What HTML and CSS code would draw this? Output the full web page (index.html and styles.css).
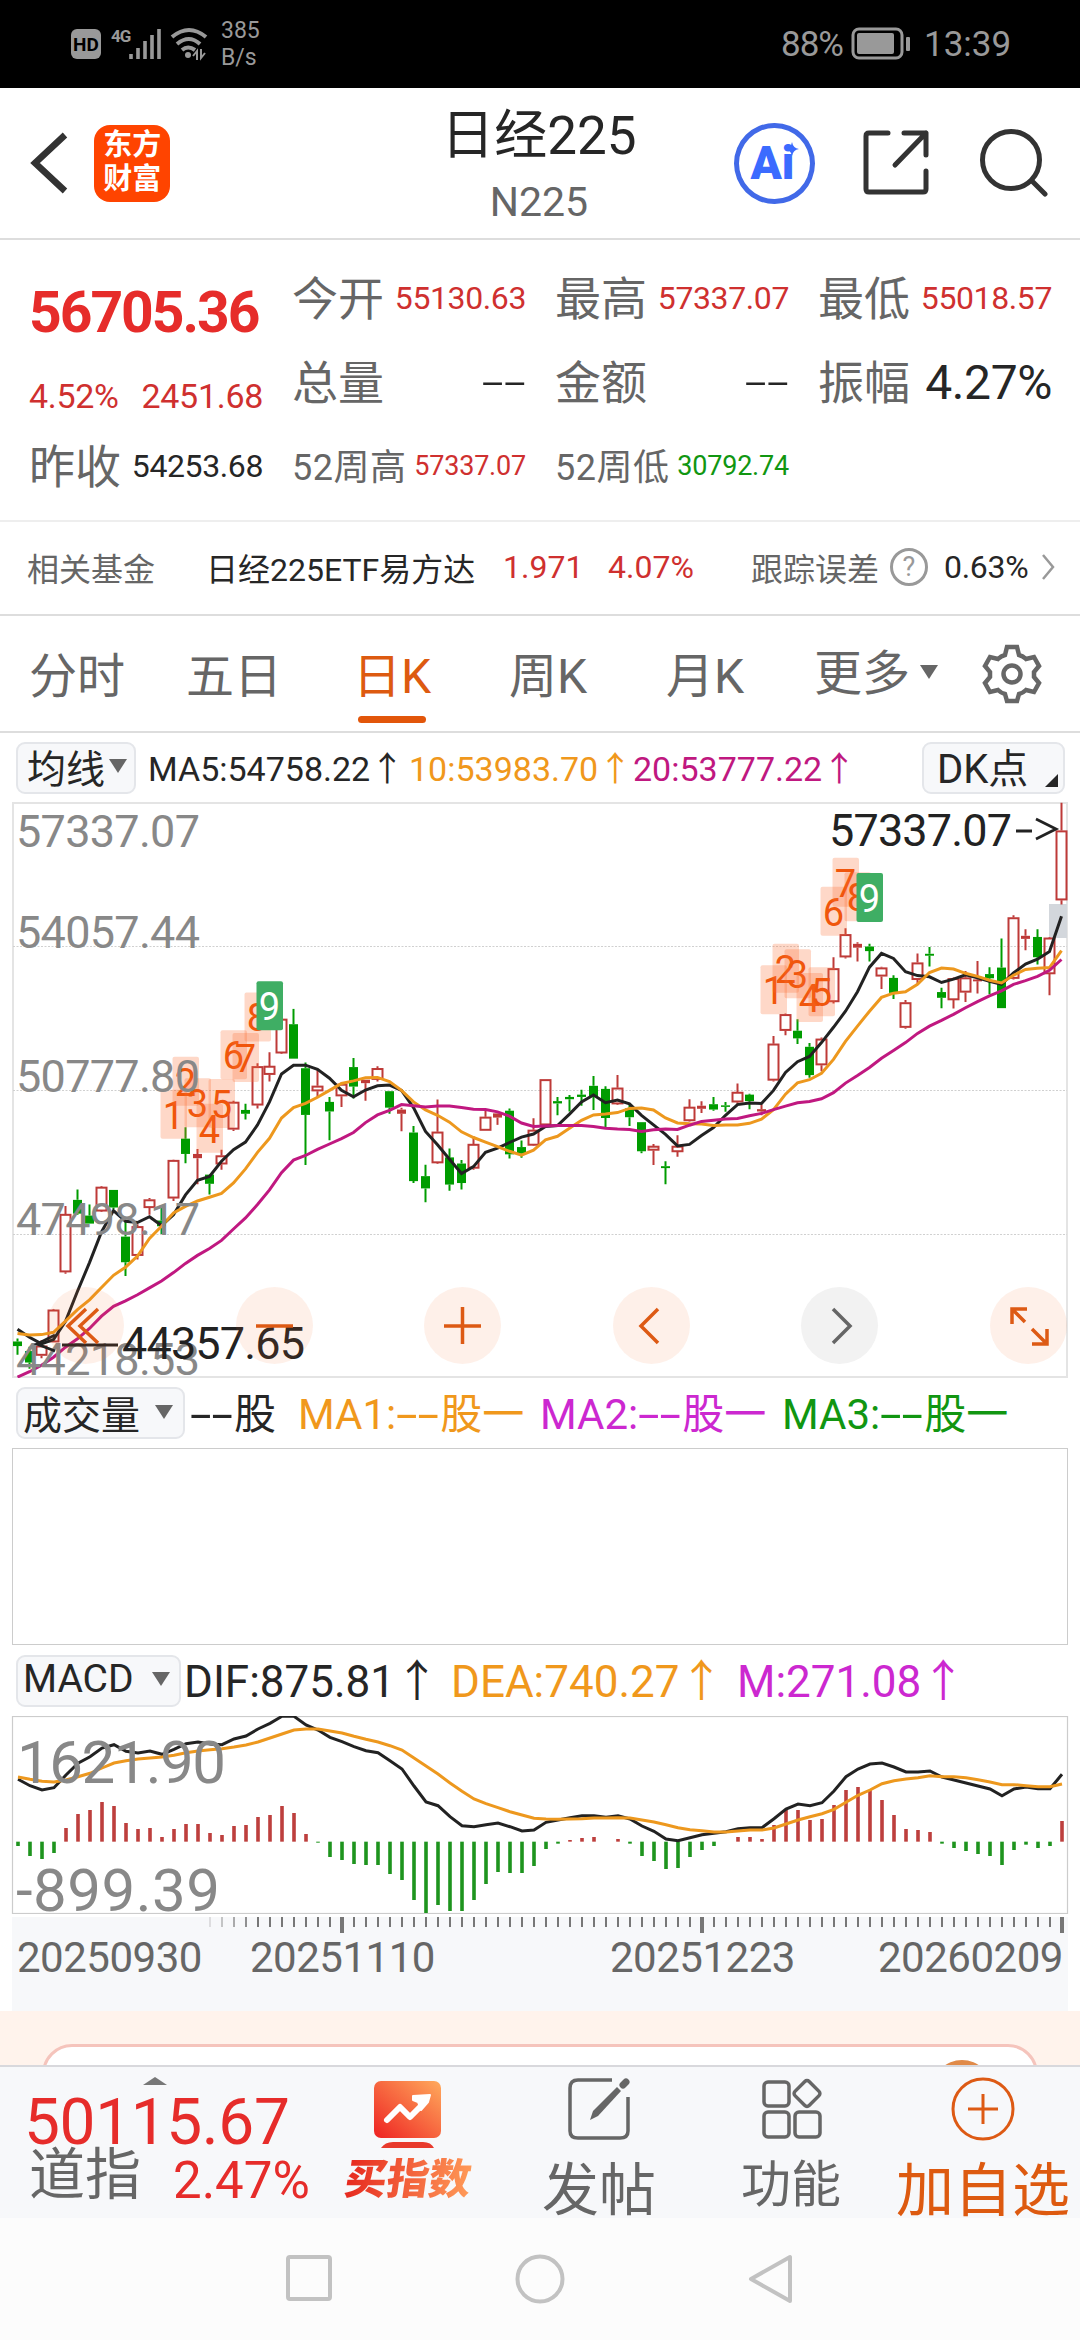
FILE: index.html
```
<!DOCTYPE html>
<html lang="zh-CN">
<head>
    <meta charset="UTF-8">
    <meta name="viewport" content="width=device-width, initial-scale=1.0">
    <title>日经225</title>
    <link rel="stylesheet" href="styles.css">
</head>
<body>

    <div class="statusbar">
        <span class="hd">HD</span>
        <span class="net">4G</span>
        <svg class="signal" width="34" height="32" viewBox="0 0 34 32"><path d="M3 26v5M10 20v11M17 13v18M24 7v24M31 1v30" stroke="#999" stroke-width="3.6"/></svg>
        <svg class="wifi" width="38" height="34" viewBox="0 0 38 34" fill="none" stroke="#999" stroke-width="4"><path d="M2 10Q19-4 36 10M7 17Q19 7 30 17M12 23Q18 18 25 23"/><circle cx="18" cy="28" r="3" fill="#999" stroke="none"/><path d="M23 29l4-5v9M31 22v9l4-5" stroke-width="2"/></svg>
        <span class="speed">385<br>B/s</span>
        <span class="percent">88%</span>
        <svg class="battery" width="60" height="34" viewBox="0 0 60 34"><rect x="2" y="2" width="49" height="29" rx="6" fill="none" stroke="#999" stroke-width="3"/><rect x="6" y="6" width="37" height="21" rx="2" fill="#999"/><rect x="55" y="10" width="4" height="14" rx="1" fill="#999"/></svg>
        <span class="clock">13:39</span>
    </div>

    <div class="header">
        <svg class="back" width="44" height="70" viewBox="0 0 44 70"><path d="M38 7L8 35L38 63" fill="none" stroke="#333" stroke-width="6.5"/></svg>
        <div class="logo">东方<br>财富</div>
        <div class="title">
            <h1>日经225</h1>
            <p>N225</p>
        </div>
        <div class="ai">Ai<svg width="14" height="14" viewBox="0 0 14 14"><path d="M7 0Q8 6 14 7Q8 8 7 14Q6 8 0 7Q6 6 7 0z" fill="#3b6bff"/></svg></div>
        <svg class="share" width="70" height="70" viewBox="0 0 70 70" fill="none" stroke="#333" stroke-width="5" stroke-linecap="round" stroke-linejoin="round"><path d="M26 5H7Q4 5 4 8V61Q4 64 7 64H61Q64 64 64 61V43M42 5H64V27M64 5L33 37"/></svg>
        <svg class="search" width="70" height="70" viewBox="0 0 70 70" fill="none" stroke="#333" stroke-width="5" stroke-linecap="round"><circle cx="33" cy="32" r="28.5"/><path d="M54 53L67 66"/></svg>
    </div>

    <div class="quote">
        <div class="main-price">
            <div class="price">56705.36</div>
            <div class="change"><span>4.52%</span><span>2451.68</span></div>
            <div class="item"><label>昨收</label><b>54253.68</b></div>
        </div>
        <div class="item"><label>今开</label><b class="up">55130.63</b></div>
        <div class="item"><label>最高</label><b class="up">57337.07</b></div>
        <div class="item"><label>最低</label><b class="up">55018.57</b></div>
        <div class="item"><label>总量</label><b class="none">--</b></div>
        <div class="item"><label>金额</label><b class="none">--</b></div>
        <div class="item"><label>振幅</label><b class="big">4.27%</b></div>
        <div class="item week"><label>52周高</label><b class="up">57337.07</b></div>
        <div class="item week"><label>52周低</label><b class="down">30792.74</b></div>
    </div>

    <div class="fund">
        <span class="fund-label">相关基金</span>
        <span class="fund-name">日经225ETF易方达</span>
        <span class="fund-value up">1.971</span>
        <span class="fund-rate up">4.07%</span>
        <span class="fund-error">跟踪误差</span>
        <span class="help">?</span>
        <span class="fund-diff">0.63%</span>
        <svg width="16" height="28" viewBox="0 0 16 28"><path d="M3 2L13 14L3 26" fill="none" stroke="#999" stroke-width="2.5"/></svg>
    </div>

    <div class="tabs">
        <span>分时</span>
        <span>五日</span>
        <span class="active">日K</span>
        <span>周K</span>
        <span>月K</span>
        <span class="more">更多<i class="caret"></i></span>
        <svg width="60" height="60" viewBox="0 0 60 60" fill="none" stroke="#666" stroke-width="4.5" stroke-linejoin="miter"><path d="M25 3H35L37 11Q41 12 44 15L52 13L57 22L52 28V33L57 39L52 48L44 46Q41 49 37 50L35 57H25L23 50Q19 49 16 46L8 48L3 39L8 33V28L3 22L8 13L16 15Q19 12 23 11Z"/><circle cx="30" cy="30" r="8.5"/></svg>
    </div>

    <div class="legend ma">
        <span class="picker">均线<i class="caret"></i></span>
        <span class="black">MA5:54758.22↑</span>
        <span class="orange">10:53983.70↑</span>
        <span class="pink">20:53777.22↑</span>
        <span class="picker dk">DK点<i class="corner"></i></span>
    </div>

    <div class="price-chart">
        <svg id="kline" width="1080" height="576" viewBox="0 0 1080 576"></svg>
        <div class="controls">
            <span><svg viewBox="0 0 77 77"><path d="M39 22L21 39L39 56M51 22L33 39L51 56"/></svg></span>
            <span><svg viewBox="0 0 77 77"><path d="M20 39H57"/></svg></span>
            <span><svg viewBox="0 0 77 77"><path d="M20 39H57M38.500 20V57"/></svg></span>
            <span><svg viewBox="0 0 77 77"><path d="M45 22L28 39L45 56"/></svg></span>
            <span class="off"><svg viewBox="0 0 77 77"><path d="M32 22L49 39L32 56"/></svg></span>
            <span><svg viewBox="0 0 77 77"><path d="M37 22H22V37M22 22L35 35M42 57H57V42M57 57L42 42"/></svg></span>
        </div>
    </div>

    <div class="legend volume">
        <span class="picker">成交量<i class="caret"></i></span>
        <span class="black"><i class="dash">--</i>股</span>
        <span class="orange">MA1:<i class="dash">--</i>股一</span>
        <span class="purple">MA2:<i class="dash">--</i>股一</span>
        <span class="green">MA3:<i class="dash">--</i>股一</span>
    </div>
    <div class="volume-chart"></div>

    <div class="legend macd">
        <span class="picker">MACD<i class="caret"></i></span>
        <span class="black">DIF:875.81↑</span>
        <span class="orange">DEA:740.27↑</span>
        <span class="purple">M:271.08↑</span>
    </div>
    <svg id="macd" width="1080" height="198" viewBox="0 0 1080 198"></svg>

    <div class="axis">
        <svg id="ticks" width="1056" height="17" viewBox="12 0 1056 17"></svg>
        <div class="dates">
            <span>20250930</span>
            <span>20251110</span>
            <span>20251223</span>
            <span>20260209</span>
        </div>
    </div>

    <div class="promo"><div class="promo-card"><i></i></div></div>

    <div class="toolbar">
        <div class="index">
            <i class="up-caret"></i>
            <div class="index-price">50115.67</div>
            <div class="index-row"><span>道指</span><b>2.47%</b></div>
        </div>
        <div class="tool buy">
            <svg width="70" height="72" viewBox="0 0 70 72">
                <defs><linearGradient id="fire" x1="0" y1="1" x2="1" y2="0"><stop offset="0" stop-color="#ee2222"/><stop offset="1" stop-color="#ffaa5c"/></linearGradient></defs>
                <rect x="1" y="2" width="67" height="57" rx="7" fill="url(#fire)"/>
                <path d="M8 69Q12 63 20 63H50Q58 63 61 69Z" fill="#e83a2c"/>
                <path d="M14 41L27 28L37 38L50 25" fill="none" stroke="#fff" stroke-width="6" stroke-linecap="round" stroke-linejoin="round"/>
                <path d="M40 17L57 16L55 23L48 31L45 23L40 21Z" fill="#fff" stroke="#fff" stroke-width="2" stroke-linejoin="round"/>
            </svg>
            <span>买指数</span>
        </div>
        <div class="tool post">
            <svg width="64" height="64" viewBox="0 0 64 64"><path d="M45 3H11Q3 3 3 11V54Q3 61 11 61H53Q61 61 61 54V20" fill="none" stroke="#666" stroke-width="3.5"/><path d="M50 10L54 14L31 39L23 43L26 34Z" fill="#666"/><path d="M56 8L59 5" stroke="#666" stroke-width="7" stroke-linecap="round"/></svg>
            <span>发帖</span>
        </div>
        <div class="tool func">
            <svg width="62" height="62" viewBox="0 0 62 62" fill="none" stroke="#666" stroke-width="3.500"><rect x="4" y="4" width="25" height="24" rx="4"/><rect x="4" y="34" width="25" height="25" rx="4"/><rect x="35" y="34" width="25" height="25" rx="4"/><rect x="37" y="5.500" width="20" height="20" rx="3" transform="rotate(45 47 15.500)"/></svg>
            <span>功能</span>
        </div>
        <div class="tool add">
            <svg width="66" height="66" viewBox="0 0 66 66" fill="none" stroke="#dd5a14" stroke-width="3"><circle cx="33" cy="33" r="30"/><path d="M18 33H48M33 18V48"/></svg>
            <span>加自选</span>
        </div>
    </div>

    <div class="navbar">
        <svg width="52" height="52" viewBox="0 0 52 52"><rect x="5" y="4" width="42" height="42" rx="2"/></svg>
        <svg width="52" height="52" viewBox="0 0 52 52"><circle cx="26" cy="26" r="22.500"/></svg>
        <svg width="52" height="52" viewBox="0 0 52 52"><path d="M45 4V48L6 26Z" stroke-linejoin="round"/></svg>
    </div>

    <script src="chart.js"></script>
</body>
</html>
```
FILE: styles.css
```
* {
    margin: 0;
    padding: 0;
    box-sizing: border-box;
}

body {
    width: 1080px;
    height: 2340px;
    overflow: hidden;
    background: #fff;
    color: #262626;
    font-family: Roboto, "Noto Sans CJK SC", sans-serif;
}

i {
    font-style: normal;
}

svg {
    display: block;
    flex: none;
}

.up { color: #cf302f; }
.down { color: #119611; }
.black { color: #262626; }
.orange { color: #f0981c; }
.pink { color: #c01880; }
.purple { color: #cc28d0; }
.green { color: #119611; }

/* status bar */
.statusbar {
    height: 88px;
    background: #000;
    color: #999;
    display: flex;
    align-items: center;
    padding-left: 71px;
}

.hd {
    width: 30px;
    height: 30px;
    border-radius: 6px;
    background: #999;
    color: #000;
    font-size: 19px;
    font-weight: bold;
    line-height: 31px;
    text-align: center;
}

.net {
    width: 19px;
    margin-left: 10px;
    margin-bottom: 16px;
    font-size: 17px;
    font-weight: bold;
    letter-spacing: -1px;
    line-height: 18px;
}

.signal { margin-left: -2px; }
.wifi { margin-left: 8px; }

.speed {
    width: 50px;
    margin-left: 13px;
    font-size: 23px;
    line-height: 27px;
}

.percent {
    margin-left: 510px;
    width: 70px;
    font-size: 35px;
    letter-spacing: -1px;
}

.clock {
    margin-left: 13px;
    font-size: 35px;
}

/* header */
.header {
    height: 152px;
    border-bottom: 2px solid #ddd;
    display: flex;
    align-items: center;
    padding: 0 32px 0 27px;
}

.logo {
    width: 77px;
    height: 77px;
    margin-left: 23px;
    border-radius: 16px;
    background: #ff4400;
    color: #fff;
    font-size: 29px;
    font-weight: bold;
    line-height: 34px;
    text-align: center;
    padding-top: 3px;
}

.title {
    width: 400px;
    margin-left: 170px;
    padding-top: 8px;
    text-align: center;
}

.title h1 {
    font-size: 53px;
    font-weight: normal;
    line-height: 70px;
}

.title p {
    font-size: 41px;
    line-height: 50px;
    color: #666;
    padding-top: 6px;
    height: 62px;
}

.ai {
    position: relative;
    width: 81px;
    height: 81px;
    margin-left: -3px;
    border: 5px solid #4169e8;
    border-radius: 50%;
    color: #3b6bff;
    font-size: 46px;
    font-weight: 900;
    line-height: 70px;
    padding-left: 11px;
}

.ai svg {
    position: absolute;
    left: 46px;
    top: 14px;
}

.share { margin-left: 47px; }
.search { margin-left: 46px; }

/* quote */
.quote {
    height: 282px;
    border-bottom: 2px solid #eee;
    padding: 16px 28px 0 29px;
    display: grid;
    grid-template-columns: repeat(4, 234px);
    grid-template-rows: repeat(3, 84px);
    column-gap: 29px;
}

.main-price {
    grid-row: 1 / 4;
}

.price {
    height: 112px;
    font-size: 57px;
    font-weight: bold;
    letter-spacing: -2px;
    line-height: 114px;
    color: #e62c2a;
}

.change {
    height: 56px;
    display: flex;
    justify-content: space-between;
    font-size: 34px;
    letter-spacing: -0.3px;
    line-height: 56px;
    color: #cf302f;
}

.item {
    height: 84px;
    display: flex;
    justify-content: space-between;
    align-items: center;
}

.item label {
    font-size: 46px;
    color: #666;
    padding-bottom: 7px;
}

.item b {
    font-size: 32px;
    font-weight: normal;
    letter-spacing: -0.4px;
}

.item .big {
    font-size: 48px;
}

.item .none {
    font-size: 50px;
    font-weight: 300;
    transform: scaleX(1.6);
    transform-origin: right;
}

.item.week label {
    font-size: 36px;
    letter-spacing: 0.5px;
    padding-bottom: 4px;
}

.item.week b {
    font-size: 27px;
    letter-spacing: -0.2px;
}

/* related fund */
.fund {
    height: 94px;
    border-bottom: 2px solid #ddd;
    display: flex;
    align-items: center;
    padding: 0 0 2px 27px;
    font-size: 32px;
}

.fund-label { width: 179px; color: #666; }
.fund-name { width: 297px; }
.fund-value { width: 105px; }
.fund-rate { width: 143px; }
.fund-error { width: 139px; color: #666; }

.help {
    width: 38px;
    height: 38px;
    border: 3px solid #999;
    border-radius: 50%;
    color: #999;
    font-size: 27px;
    line-height: 32px;
    text-align: center;
}

.fund-diff { width: 96px; margin-left: 16px; letter-spacing: -0.3px; }

/* period tabs */
.tabs {
    height: 117px;
    border-bottom: 2px solid #ddd;
    display: flex;
    align-items: center;
    padding-left: 29px;
    font-size: 48px;
    color: #666;
}

.tabs span {
    position: relative;
    width: 157px;
    height: 72px;
    line-height: 78px;
}

.tabs .active {
    color: #dd5a10;
    margin-left: 10px;
    width: 156px;
}

.tabs .active::after {
    content: "";
    position: absolute;
    left: 5px;
    top: 78px;
    width: 68px;
    height: 7px;
    border-radius: 4px;
    background: #e2560a;
}

.tabs .more {
    width: 168px;
    margin-left: -9px;
    display: flex;
    align-items: center;
}

.tabs .more .caret {
    margin-left: 10px;
    margin-top: -4px;
}

.caret {
    display: inline-block;
    border: 9px solid transparent;
    border-top: 14px solid #666;
    border-bottom: 0;
}

/* chart legends */
.legend {
    display: flex;
    align-items: center;
    padding-left: 16px;
    white-space: nowrap;
}

.picker {
    height: 52px;
    border: 2px solid #e4e6ea;
    border-radius: 9px;
    background: #f7f8fa;
    display: flex;
    align-items: center;
    padding-bottom: 3px;
}

.ma {
    height: 69px;
    font-size: 34px;
}

.ma > span:not(.picker) {
    padding-bottom: 3px;
}

.ma .picker {
    width: 120px;
    padding-left: 9px;
    font-size: 39px;
}

.ma .picker .caret { margin-left: 4px; }
.ma .black { width: 261px; margin-left: 12px; }
.ma .orange { width: 224px; }
.ma .pink { width: 289px; }

.ma .dk {
    position: relative;
    width: 143px;
    padding-left: 13px;
    font-size: 40px;
}

.corner {
    position: absolute;
    right: 5px;
    bottom: 5px;
    border-left: 13px solid transparent;
    border-bottom: 13px solid #262626;
}

.volume {
    height: 70px;
    font-size: 42px;
}

.volume > span:not(.picker),
.macd > span:not(.picker) {
    padding-bottom: 6px;
}

.volume .picker {
    width: 169px;
    padding-left: 5px;
    font-size: 39px;
}

.volume .caret { margin-left: 15px; }
.volume .black { width: 108px; margin-left: 5px; }
.volume .orange { width: 242px; }
.volume .purple { width: 242px; }

.dash {
    display: inline-block;
    width: 44px;
    transform: scaleX(1.85);
    transform-origin: left;
}

.volume-chart {
    height: 197px;
    margin: 0 12px;
    border: 1px solid #ccc;
}

.macd {
    height: 71px;
    font-size: 44px;
}

.macd .picker {
    width: 165px;
    padding-left: 5px;
    font-size: 39px;
}

.macd .caret { margin-left: 18px; }
.macd .black { width: 267px; margin-left: 3px; }
.macd .orange { width: 286px; }

/* price chart */
.price-chart {
    position: relative;
    height: 576px;
}

.controls {
    position: absolute;
    left: 47px;
    top: 485px;
    width: 1020px;
    display: flex;
    justify-content: space-between;
}

.controls span {
    width: 77px;
    height: 77px;
    border-radius: 50%;
    background: rgba(248, 110, 40, 0.1);
}

.controls path {
    fill: none;
    stroke: #dd5a14;
    stroke-width: 3.5;
}

.controls .off {
    background: #f2f2f2;
}

.controls .off path {
    stroke: #666;
}

/* time axis */
.axis {
    height: 94px;
    margin: 3px 12px 0;
    background: #f7f8fa;
}

.dates {
    display: flex;
    padding-left: 5px;
    font-size: 42px;
    letter-spacing: -0.5px;
    line-height: 48px;
    color: #666;
}

.dates span:nth-child(1) { width: 233px; }
.dates span:nth-child(2) { width: 360px; }
.dates span:nth-child(3) { width: 268px; }

/* promo card cut by the toolbar */
.promo {
    height: 54px;
    overflow: hidden;
    background: #fff3ec;
    padding: 33px 42px 0;
}

.promo-card {
    position: relative;
    height: 90px;
    border: 3px solid #f5c4bc;
    border-radius: 30px;
    background: #fff;
}

.promo-card i {
    position: absolute;
    right: 43px;
    top: 13px;
    width: 60px;
    height: 60px;
    border-radius: 50%;
    background: #e08a48;
}

/* bottom toolbar */
.toolbar {
    height: 153px;
    overflow: hidden;
    border-top: 2px solid #d8d8dc;
    background: #f7f8fa;
    display: flex;
    color: #666;
}

.index {
    flex: none;
    width: 325px;
    padding-left: 24px;
}

.up-caret {
    display: block;
    width: 24px;
    margin: 10px 0 0 119px;
    border: 12px solid transparent;
    border-bottom: 8px solid #777;
    border-top: 0;
}

.index-price {
    height: 70px;
    font-size: 64px;
    letter-spacing: -0.4px;
    line-height: 76px;
    color: #e62c2a;
}

.index-row {
    display: flex;
    align-items: center;
    height: 50px;
    padding-left: 5px;
}

.index-row span {
    width: 144px;
    font-size: 56px;
    line-height: 60px;
    padding-bottom: 10px;
}

.index-row b {
    font-size: 51px;
    font-weight: normal;
    color: #e62c2a;
}

.tool {
    flex: none;
    display: flex;
    flex-direction: column;
    align-items: center;
    white-space: nowrap;
}

.tool span {
    line-height: 70px;
}

.buy { width: 166px; padding-top: 12px; }
.post { width: 216px; padding-top: 10px; }
.func { width: 168px; padding-top: 11px; }
.add { width: 216px; padding-top: 9px; }

.buy span {
    font-size: 42px;
    font-weight: 900;
    line-height: 60px;
    margin-top: -1px;
    transform: skewX(-8deg);
    background: linear-gradient(90deg, #e6281e, #ff9a58);
    -webkit-background-clip: text;
    color: transparent;
}

.post span {
    font-size: 57px;
    margin-top: 15px;
}

.func span {
    font-size: 50px;
    margin-top: 10px;
}

.add span {
    font-size: 58px;
    margin-top: 14px;
    color: #dd5a10;
}

/* system navigation */
.navbar {
    height: 122px;
    background: #fcfcfc;
    display: flex;
    justify-content: center;
    gap: 179px;
    padding-top: 35px;
}

.navbar svg {
    fill: none;
    stroke: #c2c2c2;
    stroke-width: 4;
}
```
FILE: chart.js
```
// direction (1 = up, 0 = down, 2 = flat up), high, body top, body bottom, low
const candles = [
    [0,1433,1441,1453,1476],[0,1455,1466,1496,1512],[1,1438,1452,1478,1485],[1,1356,1358,1443,1443],
    [1,1087,1108,1260,1264],[0,1044,1071,1107,1110],[0,1083,1112,1133,1133],[1,1035,1037,1101,1103],
    [0,1045,1045,1091,1095],[0,1125,1167,1234,1270],[1,1135,1140,1217,1227],[1,1066,1070,1092,1110],
    [0,1090,1125,1140,1160],[1,966,967,1067,1074],[0,881,911,951,975],[2,938,951,962,1030],
    [0,1005,1005,1029,1057],[1,940,955,978,992],[1,812,815,887,891],[0,820,836,846,861],
    [1,714,722,824,832],[1,685,721,744,762],[1,596,598,688,690],[0,572,612,702,702],
    [0,712,727,849,980],[1,730,773,787,802],[0,802,815,840,915],[1,765,768,800,828],
    [0,700,724,775,806],[2,757,757,766,812],[1,722,727,757,762],[0,787,787,830,846],
    [2,830,835,846,892],[0,878,895,1022,1027],[0,979,1009,1041,1077],[1,809,893,975,977],
    [0,937,960,1031,1047],[0,967,976,1027,1044],[1,905,925,989,992],[1,838,854,890,890],
    [2,845,845,856,875],[0,832,838,952,963],[0,916,933,950,961],[1,858,888,929,930],
    [1,756,756,876,878],[0,802,813,819,850],[0,797,802,808,840],[0,783,796,802,825],
    [0,747,773,800,836],[0,774,781,857,881],[1,745,778,821,823],[0,822,832,855,878],
    [0,868,868,944,949],[1,925,930,942,980],[0,970,983,988,1030],[1,902,930,946,958],
    [1,808,828,865,866],[2,813,825,833,844],[0,802,821,835,838],[0,815,824,828,841],
    [1,767,789,816,822],[0,794,796,813,834],[2,823,834,840,850],[1,643,663,759,762],
    [1,584,586,629,641],[0,599,629,649,664],[0,661,671,745,752],[1,647,650,719,735],
    [1,437,466,554,558],[1,361,377,437,440],[2,398,402,412,448],[0,402,409,421,448],
    [1,462,464,487,520],[0,484,491,530,546],[1,549,555,621,624],[1,427,451,496,506],
    [0,410,428,433,461],[0,517,528,543,570],[1,490,492,549,571],[1,473,490,529,554],
    [2,447,495,500,532],[0,463,481,492,534],[0,388,464,570,570],[1,327,333,493,495],
    [2,364,381,389,419],[0,364,384,437,456],[1,384,386,481,536],[1,33,106,288,299]
];

const ma5 = [1409,1430,1447,1436,1388,1310,1235,1155,1099,1127,1130,1115,1138,1110,1058,1020,1010,970,940,920,875,815,742,719,719,730,753,785,802,784,773,771,785,830,892,927,965,1002,984,947,936,921,907,899,879,877,847,815,797,817,810,820,850,875,900,930,926,903,882,850,822,818,819,785,738,710,696,660,620,578,527,463,427,440,475,485,488,503,494,483,491,500,508,478,455,442,422,330];
const ma10 = [1420,1424,1423,1417,1388,1358,1332,1300,1268,1247,1218,1172,1140,1105,1088,1074,1064,1054,1027,990,947,910,857,830,819,803,785,767,760,752,751,762,785,815,836,850,868,893,908,920,932,944,954,941,914,905,884,863,849,847,843,832,831,836,857,870,872,873,877,875,875,871,860,835,795,765,757,740,704,657,617,578,542,531,527,508,477,465,468,479,487,497,504,484,469,466,464,420];
const ma20 = [1534,1520,1503,1482,1456,1434,1407,1375,1349,1335,1319,1301,1283,1261,1237,1216,1198,1177,1147,1118,1083,1045,1000,967,955,939,925,911,895,869,849,837,822,825,828,826,826,830,834,835,841,852,870,879,878,877,877,877,879,884,886,887,892,888,886,887,876,866,863,860,858,851,845,835,826,817,814,807,791,766,746,725,701,681,660,636,617,602,586,569,553,538,525,508,498,487,471,443];

const dif = [418,437,450,443,405,370,350,324,314,334,339,333,343,328,311,306,312,314,297,288,267,250,229,229,255,270,292,305,320,332,338,362,387,438,486,497,530,557,560,554,549,560,573,570,547,540,533,527,527,532,527,537,558,574,597,602,593,584,580,575,566,563,563,536,507,492,497,488,453,410,387,372,369,381,396,396,393,411,420,429,438,447,467,447,441,446,446,403];
const dea = [411,418,424,426,420,410,400,384,369,362,357,354,351,346,338,333,329,326,321,315,306,294,282,270,267,267,273,279,289,298,306,317,330,354,378,402,429,454,477,491,503,515,525,535,537,538,537,536,534,534,533,534,540,546,554,563,569,572,576,576,573,570,570,564,552,540,530,521,508,487,466,450,431,422,417,413,407,410,410,413,419,426,434,434,437,440,440,432];
const bars = [-13,-43,-52,-34,41,83,95,119,107,56,38,41,14,38,53,53,26,20,47,50,74,80,107,86,23,-3,-46,-55,-67,-70,-70,-97,-115,-175,-214,-190,-208,-208,-175,-127,-91,-94,-94,-73,-22,-6,5,11,14,0,8,-6,-43,-58,-82,-79,-46,-25,-13,0,14,14,8,50,95,95,65,68,110,155,164,155,125,80,38,35,29,-6,-19,-28,-37,-43,-70,-25,-9,-19,-13,62];

// count, candle index, top
const marks = [
    [1,13,783],[2,14,697],[3,15,753],[4,16,820],[5,17,755],[6,18,628],[7,19,635],[8,20,529],[9,21,500],
    [1,63,458],[2,64,402],[3,65,416],[4,66,478],[5,67,463],[6,68,253],[7,69,177],[8,70,215],[9,71,217]
];

const px = i => 17.5 + i * 12;
const py = v => v / 2.613 - 12;
const line = (data, x, y, color) => `<polyline points="${data.map((v, i) => x(i).toFixed(1) + ',' + y(v).toFixed(1)).join(' ')}" fill="none" stroke="${color}" stroke-width="3"/>`;
const label = (x, y, size, width, color, text) => `<text x="${x}" y="${y}" font-size="${size}" textLength="${width}" fill="${color}">${text}</text>`;

let k = '<rect x="13" y="1" width="1054" height="574" fill="none" stroke="#e4e4e4" stroke-width="2"/>';
[144.5, 288.5, 432.5].forEach(y => {
    k += `<path d="M13 ${y}H1067" stroke="#d0d0d0" stroke-dasharray="2 1.500"/>`;
});
k += '<rect x="1049" y="102" width="18" height="34" fill="#d3d7dc"/>';

candles.forEach(([dir, high, top, bottom, low], i) => {
    const x = px(i), color = dir ? '#be3a38' : '#009c00';
    const t = py(top), b = py(bottom);
    k += `<path d="M${x} ${py(high)}V${t}M${x} ${b}V${py(low)}" stroke="${color}" stroke-width="2"/>`;
    if (dir === 1) {
        k += `<rect x="${x - 5}" y="${t + 0.8}" width="10" height="${Math.max(b - t - 1.6, 1)}" fill="none" stroke="${color}" stroke-width="2"/>`;
    } else {
        k += `<rect x="${x - 4.5}" y="${t}" width="9" height="${Math.max(b - t, 1.5)}" fill="${color}"/>`;
    }
});

k += line(ma5, px, py, '#222') + line(ma10, px, py, '#ed981e') + line(ma20, px, py, '#c01880');

marks.forEach(([n, i, top]) => {
    const x = px(i), y = py(top), last = n === 9;
    k += `<rect x="${x - 13}" y="${y}" width="26.500" height="49" rx="2" fill="${last ? '#3fae64' : 'rgba(250,110,50,0.27)'}"/>`;
    k += `<text x="${x}" y="${y + 39}" font-size="38" text-anchor="middle" fill="${last ? '#fff' : '#f0560c'}">${n}</text>`;
});

k += label(16, 45, 45, 184, '#888', '57337.07');
k += label(16, 145.5, 45, 184, '#888', '54057.44');
k += label(16, 289.5, 45, 184, '#888', '50777.80');
k += label(16, 433, 45, 184, '#888', '47498.17');
k += label(16, 573, 45, 184, '#888', '44218.53');
k += label(829, 43.5, 45, 183, '#222', '57337.07');
k += label(122, 557, 45, 183, '#222', '44357.65');
k += '<path d="M1016 29H1032M1036 17L1056 27L1036 37M62 543H118M55 533L37 542L55 549" fill="none" stroke="#222" stroke-width="2.8"/>';
document.getElementById('kline').innerHTML = k;

const mx = i => 18 + i * 12;
const my = v => v / 3 - 76;
let m = '<defs><clipPath id="box"><rect x="12" y="0" width="1056" height="198"/></clipPath></defs>';
m += '<rect x="12.500" y="0.500" width="1055" height="197" fill="none" stroke="#ccc" stroke-width="1.200"/><g clip-path="url(#box)">';
bars.forEach((v, i) => {
    if (v) m += `<rect x="${mx(i) - 1.8}" y="${v > 0 ? my(605 - v) : my(605)}" width="3.600" height="${Math.abs(v) / 3}" fill="${v > 0 ? '#bd3f3d' : '#1e941e'}"/>`;
});
m += line(dif, mx, my, '#222') + line(dea, mx, my, '#ed981e') + '</g>';
m += label(17, 67, 60, 209, '#888', '1621.90');
m += label(16, 195, 60, 204, '#888', '-899.39');
document.getElementById('macd').innerHTML = m;

let t = '';
for (let i = 16; i < 88; i++) {
    const big = i === 27 || i === 57 || i === 87;
    const fade = Math.min(1, (i - 15) / 5);
    t += `<path d="M${mx(i)} 0V${big ? 16 : 10}" stroke="#777" stroke-width="${big ? 4 : 2}" opacity="${fade}"/>`;
}
document.getElementById('ticks').innerHTML = t;
```
